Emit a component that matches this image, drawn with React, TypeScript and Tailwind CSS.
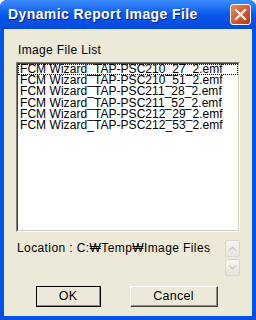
import { ChevronUp, ChevronDown } from "lucide-react"

const files = [
  "FCM Wizard_TAP-PSC210_27_2.emf",
  "FCM Wizard_TAP-PSC210_51_2.emf",
  "FCM Wizard_TAP-PSC211_28_2.emf",
  "FCM Wizard_TAP-PSC211_52_2.emf",
  "FCM Wizard_TAP-PSC212_29_2.emf",
  "FCM Wizard_TAP-PSC212_53_2.emf",
]

const CloseButton = () => (
  <div className="flex h-[21px] w-[21px] items-center justify-center rounded-[3px] border border-white bg-gradient-to-br from-[#e98a6c] via-[#d65a33] to-[#b7361a]">
    <svg width="13" height="13" viewBox="0 0 13 13" aria-hidden="true">
      <path d="M2 2 L11 11 M11 2 L2 11" stroke="white" strokeWidth="2.2" strokeLinecap="square" />
    </svg>
  </div>
)

const SpinButton = ({ down }: { down?: boolean }) => (
  <div className="flex h-[17px] w-[15px] items-center justify-center rounded-[2px] border border-[#d8d6ce] bg-gradient-to-b from-[#f6f5f0] to-[#e5e3da] text-[#c5c3bb]">
    {down ? <ChevronDown size={11} strokeWidth={3} /> : <ChevronUp size={11} strokeWidth={3} />}
  </div>
)

const DialogButton = ({ label, width, isDefault }: { label: string; width: string; isDefault?: boolean }) => (
  <div
    className={`${width} flex h-[21px] items-center justify-center border ${
      isDefault ? "border-black" : "border-t-white border-l-white border-b-[#404040] border-r-[#404040]"
    } bg-[#ece9d8] text-[12.5px] tracking-[0.3px] text-black`}
  >
    <div className="flex h-full w-full items-center justify-center border-b border-r border-[#8f8c80]">{label}</div>
  </div>
)

export default function App() {
  return (
    <div
      className="flex h-[320px] w-[256px] flex-col overflow-hidden rounded-t-[7px] bg-[#0552e8]"
      style={{ fontFamily: '"Liberation Sans", Arial, sans-serif' }}
    >
      <div className="flex h-[29px] items-center justify-between bg-gradient-to-b from-[#3d8dff] via-[#0858ec] to-[#0349d9] pl-[8px] pr-[5px]">
        <span className="text-[14px] font-bold tracking-[0.4px] text-white [text-shadow:1px_1px_0_#0a1e80]">
          Dynamic Report Image File
        </span>
        <CloseButton />
      </div>
      <div className="mx-[4px] mb-[4px] flex flex-1 flex-col bg-[#ece9d8] pl-[12px] pr-[12px] text-black">
        <div className="pt-[14px] pl-[2px] text-[12px] leading-[14px] tracking-[0.35px]">Image File List</div>
        <div className="mt-[5px] h-[170px] w-[224px] border border-t-[#7f7d74] border-l-[#7f7d74] border-b-white border-r-white bg-white">
          <div className="h-full border border-t-[#404040] border-l-[#404040] border-b-[#d4d0c8] border-r-[#d4d0c8]">
            <div className="text-[12px] leading-[11.2px] tracking-[0.05px]">
              {files.map((name, i) => (
                <div
                  key={name}
                  className={`h-[11.2px] pl-[2px] whitespace-nowrap ${i === 0 ? "outline outline-1 outline-dotted outline-black -outline-offset-1" : ""}`}
                >
                  {name}
                </div>
              ))}
            </div>
          </div>
        </div>
        <div className="mt-[6px] flex items-start justify-between">
          <span className="pt-[3px] pl-[1px] text-[12px] leading-[14px] tracking-[0.4px]">Location : C:₩Temp₩Image Files</span>
          <div className="flex flex-col gap-[2px] pt-[2px]">
            <SpinButton />
            <SpinButton down />
          </div>
        </div>
        <div className="mt-[10px] flex gap-[29px] pl-[20px]">
          <DialogButton label="OK" width="w-[65px]" isDefault />
          <DialogButton label="Cancel" width="w-[88px]" />
        </div>
      </div>
    </div>
  )
}
